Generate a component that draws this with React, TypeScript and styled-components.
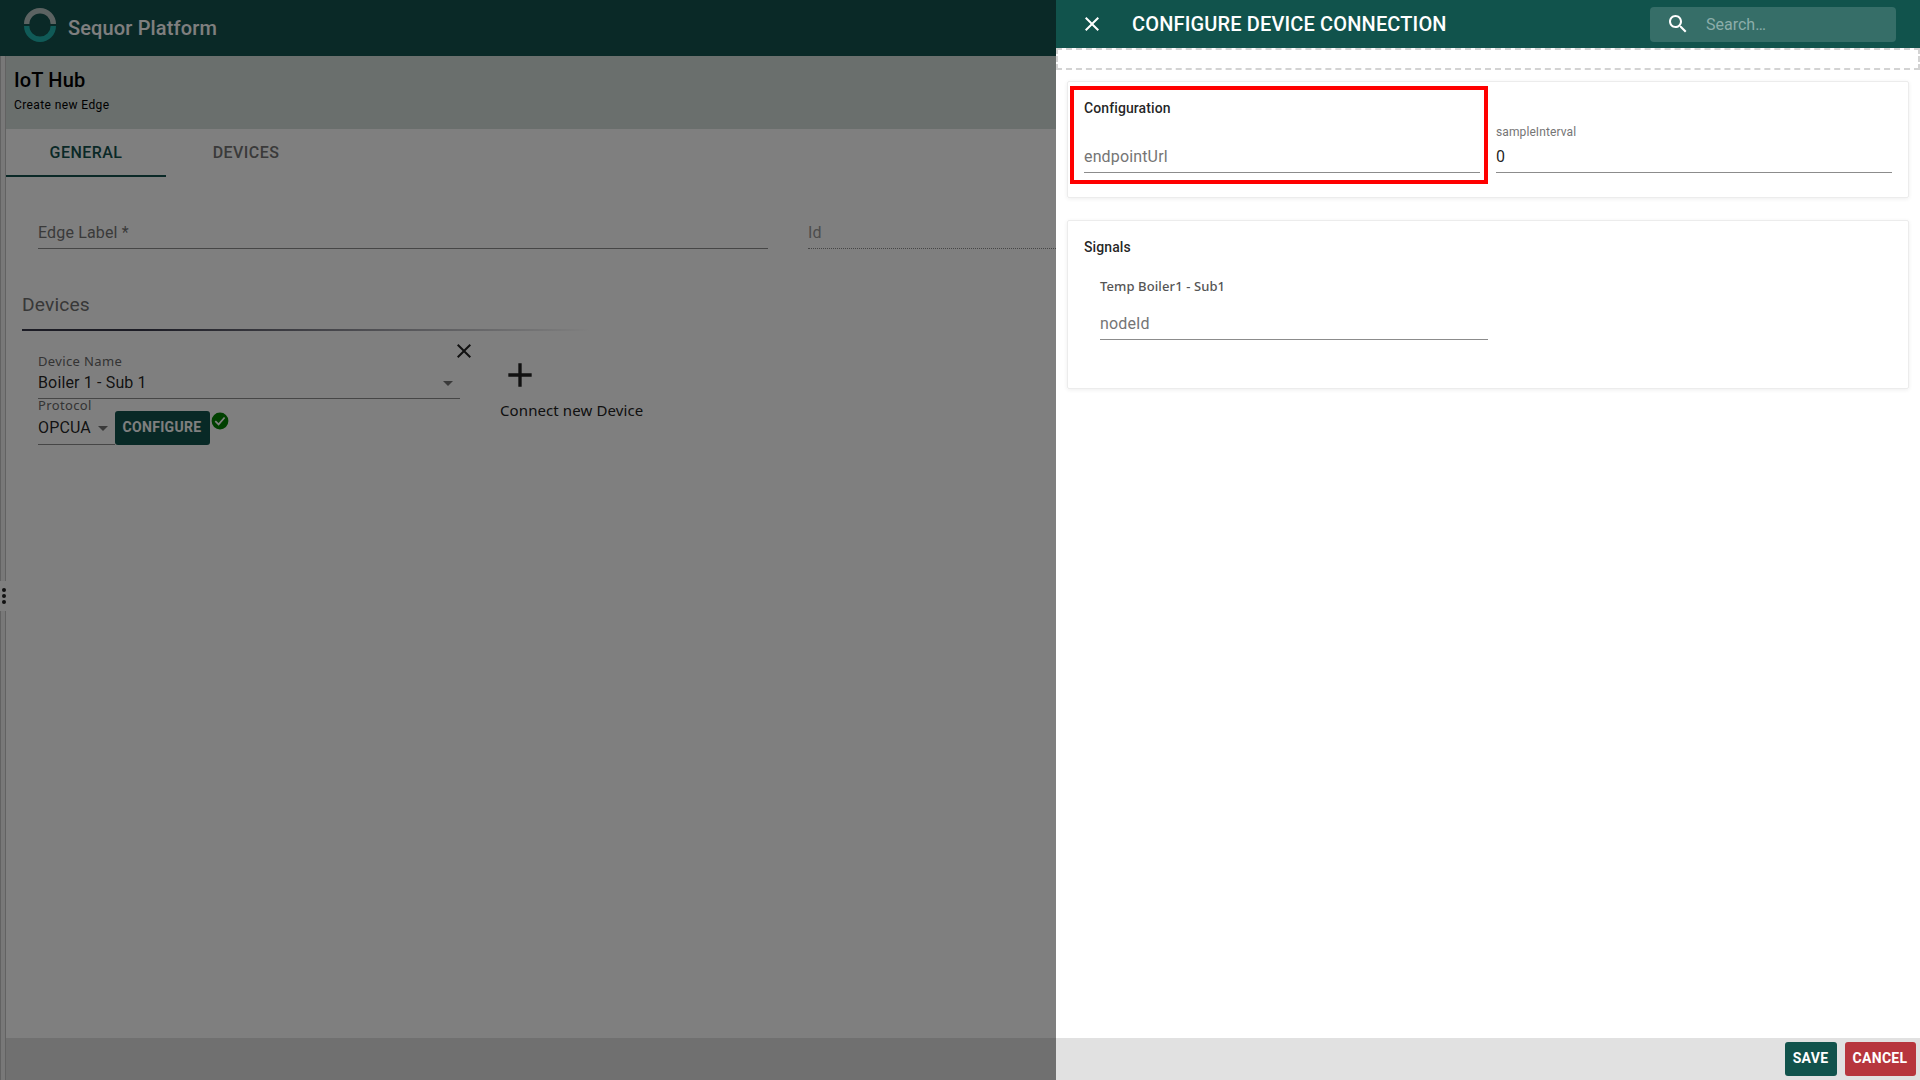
import React from "react";
import styled, { createGlobalStyle } from "styled-components";

const GlobalStyle = createGlobalStyle`
  *, *::before, *::after { box-sizing: border-box; }
  html, body, #root { height: 100%; }
  body { margin: 0; overflow: hidden; font-family: Roboto, "Liberation Sans", sans-serif; color: rgba(0, 0, 0, 0.87); background: #fff; }
`;

const system = `"Noto Sans", "Open Sans", sans-serif`;

const Screen = styled.div`
  position: relative;
  width: 1920px;
  height: 1080px;
  display: flex;
  flex-direction: column;
  overflow: hidden;
`;
const TopBar = styled.header`
  flex: none;
  height: 56px;
  display: flex;
  align-items: flex-start;
  padding: 8px 24px;
  gap: 12px;
  background: #14524e;
`;
const Brand = styled.h1`
  margin: 7px 0 0;
  font-size: 20px;
  line-height: 26px;
  font-weight: 500;
  letter-spacing: 0.15px;
  color: #fff;
`;
const Body = styled.div`
  flex: 1;
  display: flex;
  min-height: 0;
`;
const Splitter = styled.div`
  flex: none;
  width: 6px;
  display: flex;
  flex-direction: column;
`;
const Rail = styled.div<{ $height?: number }>`
  ${(p) => (p.$height ? `height: ${p.$height}px; flex: none;` : "flex: 1;")}
  background: #f0f0f0;
  border-left: 1px solid #c4c4c4;
  border-right: 1px solid #c4c4c4;
`;
const Grip = styled.div`
  height: 30px;
  display: flex;
  flex-direction: column;
  align-items: center;
  justify-content: center;
  gap: 2px;
  padding-left: 2px;
`;
const Dot = styled.span`
  width: 4px;
  height: 4px;
  border-radius: 50%;
  background: #222;
`;
const Page = styled.main`
  flex: 1;
  display: flex;
  flex-direction: column;
`;
const PageHead = styled.div`
  height: 73px;
  padding: 11px 8px;
  background: #d5dedb;
  color: #000;
`;
const PageTitle = styled.h2`
  margin: 0;
  font-size: 20px;
  line-height: 27px;
  font-weight: 500;
  letter-spacing: 0.15px;
`;
const PageSub = styled.div`
  font-size: 12px;
  line-height: 20px;
  letter-spacing: 0.4px;
  margin-top: 1px;
`;
const Tabs = styled.nav`
  display: flex;
  height: 48px;
`;
const Tab = styled.div<{ $active?: boolean }>`
  width: 160px;
  display: flex;
  align-items: center;
  justify-content: center;
  padding-bottom: 2px;
  font-size: 16px;
  font-weight: 500;
  letter-spacing: 0.45px;
  color: ${(p) => (p.$active ? "#14524e" : "#757575")};
  box-shadow: ${(p) => (p.$active ? "inset 0 -2px #14524e" : "none")};
`;
const Form = styled.div`
  padding: 0 32px;
  flex: 1;
`;
const Row = styled.div<{ $gap?: number; $top?: number }>`
  display: flex;
  align-items: flex-start;
  gap: ${(p) => p.$gap ?? 0}px;
  margin-top: ${(p) => p.$top ?? 0}px;
`;
const Field = styled.div<{ $width: number; $height?: number; $line?: number; $dotted?: boolean; $filled?: boolean }>`
  width: ${(p) => p.$width}px;
  height: ${(p) => p.$height ?? 33}px;
  flex: none;
  display: flex;
  justify-content: space-between;
  align-items: flex-start;
  font-size: 16px;
  letter-spacing: 0.15px;
  line-height: ${(p) => p.$line ?? 32}px;
  white-space: nowrap;
  color: ${(p) => (p.$filled ? "rgba(0,0,0,.87)" : p.$dotted ? "#9a9a9a" : "#757575")};
  border-bottom: 1px ${(p) => (p.$dotted ? "dotted" : "solid")} #8c8c8c;
`;
const SectionTitle = styled.h3`
  margin: 41px -16px 0;
  height: 41px;
  font-size: 19.2px;
  line-height: 29px;
  font-weight: 400;
  letter-spacing: 0.15px;
  color: #707070;
  border-bottom: 2px solid;
  border-image: linear-gradient(to right, #38384a 0, #38384a 120px, #fff 570px) 1;
`;
const Device = styled.div`
  width: 438px;
  padding-top: 21px;
  position: relative;
`;
const SmallLabel = styled.div<{ $h: number }>`
  height: ${(p) => p.$h}px;
  font-family: ${system};
  font-size: 13px;
  line-height: ${(p) => p.$h}px;
  letter-spacing: 0.36px;
  color: #686868;
`;
const RemoveIcon = styled.svg`
  position: absolute;
  left: 414px;
  top: 8px;
`;
const Button = styled.button<{ $danger?: boolean; $width: number }>`
  width: ${(p) => p.$width}px;
  height: 34px;
  padding: 0 1px 2px 0;
  border: 0;
  border-radius: 3px;
  font-family: Roboto, sans-serif;
  font-size: 14px;
  font-weight: 700;
  letter-spacing: 0.3px;
  color: #fff;
  background: ${(p) => (p.$danger ? "#b7363d" : "#11534c")};
`;
const Connect = styled.div`
  display: flex;
  flex-direction: column;
  padding: 24px 0 0 24px;
  font-family: ${system};
  font-size: 15px;
  line-height: 24px;
  letter-spacing: 0.1px;
  color: #222;
`;
const Caption = styled.span`
  margin-top: 3px;
`;
const PageFoot = styled.footer`
  height: 42px;
  background: #e1e1e1;
`;
const Backdrop = styled.div`
  position: absolute;
  inset: 0;
  background: rgba(0, 0, 0, 0.5);
`;
const Drawer = styled.aside`
  position: absolute;
  top: 0;
  right: 0;
  width: 864px;
  height: 100%;
  display: flex;
  flex-direction: column;
  background: #fff;
`;
const DrawerHead = styled.header`
  height: 48px;
  flex: none;
  display: flex;
  align-items: center;
  padding: 0 24px;
  background: #11534c;
  color: #fff;
`;
const DrawerTitle = styled.h2`
  flex: 1;
  margin: 0 0 0 28px;
  font-size: 20px;
  line-height: 26px;
  font-weight: 500;
  letter-spacing: 0.15px;
  white-space: nowrap;
`;
const Search = styled.div`
  width: 246px;
  height: 35px;
  margin-top: 1px;
  display: flex;
  align-items: center;
  gap: 16px;
  padding-left: 16px;
  border-radius: 4px;
  background: #366e68;
  color: #8cadaa;
  font-size: 16px;
  svg { color: #fff; margin-top: -1px; }
`;
const DropZone = styled.div`
  height: 22px;
  flex: none;
  border: 2px dashed #d3d3d3;
`;
const Card = styled.section<{ $height: number; $top: number }>`
  height: ${(p) => p.$height}px;
  flex: none;
  margin: ${(p) => p.$top}px 11px 0;
  border: 1px solid #ececec;
  border-radius: 2px;
  box-shadow: 0 1px 4px rgba(0, 0, 0, 0.07);
  display: flex;
`;
const Highlight = styled.div`
  width: 418px;
  height: 98px;
  margin: 4px 0 0 2px;
  flex: none;
  border: 4px solid #f00;
  padding: 8px 10px;
`;
const CardTitle = styled.h4`
  margin: 0;
  font-size: 14px;
  line-height: 20px;
  font-weight: 500;
  letter-spacing: 0.1px;
  color: rgba(0, 0, 0, 0.87);
`;
const Interval = styled.div`
  padding: 42px 0 0 8px;
  font-size: 12px;
  line-height: 16px;
  letter-spacing: 0.1px;
  color: #757575;
`;
const Signals = styled.div`
  padding: 16px;
`;
const Signal = styled.div`
  padding: 20px 0 0 16px;
`;
const SignalName = styled.div`
  font-family: ${system};
  font-size: 13px;
  line-height: 18px;
  letter-spacing: 0.1px;
  font-weight: 500;
  height: 30px;
  color: #555;
`;
const Actions = styled.footer`
  height: 42px;
  margin-top: auto;
  flex: none;
  display: flex;
  align-items: center;
  justify-content: flex-end;
  gap: 8px;
  padding-right: 4px;
  background: #e1e1e1;
`;

const Icon = ({ d, size = 24 }: { d: string; size?: number }) => (
  <svg width={size} height={size} viewBox="0 0 24 24" fill="currentColor"><path d={d} /></svg>
);
const closePath = "M19 6.41 17.59 5 12 10.59 6.41 5 5 6.41 10.59 12 5 17.59 6.41 19 12 13.41 17.59 19 19 17.59 13.41 12z";
const searchPath = "M15.5 14h-.79l-.28-.27C15.41 12.59 16 11.11 16 9.5 16 5.91 13.09 3 9.5 3S3 5.91 3 9.5 5.91 16 9.5 16c1.61 0 3.09-.59 4.23-1.57l.27.28v.79l5 4.99L20.49 19zm-6 0C7.01 14 5 11.99 5 9.5S7.01 5 9.5 5 14 7.01 14 9.5 11.99 14 9.5 14";

const Caret = styled.span<{ $top: number }>`
  width: 0;
  height: 0;
  margin: ${(p) => p.$top}px 7px 0 0;
  border: 5px solid transparent;
  border-top-color: #757575;
  border-bottom: 0;
`;
const Badge = styled.svg`
  margin: 1px 0 0 1px;
`;

export default function App() {
  return (
    <>
      <GlobalStyle />
      <Screen>
        <TopBar>
          <svg width="32" height="34" viewBox="0 0 32 34" fill="none" strokeWidth="5.4">
            <path d="M2.7 16a13.3 13.3 0 0 1 26.6 0" stroke="#b9c6c4" />
            <path d="M2.7 18a13.3 13.3 0 0 0 26.6 0" stroke="#20b5ae" />
          </svg>
          <Brand>Sequor Platform</Brand>
        </TopBar>
        <Body>
          <Splitter>
            <Rail $height={525} />
            <Grip><Dot /><Dot /><Dot /></Grip>
            <Rail />
          </Splitter>
          <Page>
            <PageHead>
              <PageTitle>IoT Hub</PageTitle>
              <PageSub>Create new Edge</PageSub>
            </PageHead>
            <Tabs>
              <Tab $active>GENERAL</Tab>
              <Tab>DEVICES</Tab>
            </Tabs>
            <Form>
              <Row $gap={40} $top={39}>
                <Field $width={730} $line={34}>Edge Label *</Field>
                <Field $width={730} $line={34} $dotted>Id</Field>
              </Row>
              <SectionTitle>Devices</SectionTitle>
              <Row>
                <Device>
                  <RemoveIcon width="24" height="24" viewBox="0 0 24 24" fill="#222"><path d={closePath} /></RemoveIcon>
                  <SmallLabel $h={18}>Device Name</SmallLabel>
                  <Field $width={422} $height={29} $line={25} $filled>Boiler 1 - Sub 1<Caret $top={11} /></Field>
                  <SmallLabel $h={12}>Protocol</SmallLabel>
                  <Row>
                    <Field $width={77} $height={34} $line={33} $filled>OPCUA<Caret $top={15} /></Field>
                    <Button $width={95}>CONFIGURE</Button>
                    <Badge width="18" height="18" viewBox="0 0 18 18">
                      <circle cx="9" cy="9" r="8.4" fill="#008000" />
                      <path d="M4.3 9.2 7.6 12.4 13.6 5.5" fill="none" stroke="#fff" strokeWidth="1.7" />
                    </Badge>
                  </Row>
                </Device>
                <Connect>
                  <Icon size={40} d="M19 13h-6v6h-2v-6H5v-2h6V5h2v6h6z" />
                  <Caption>Connect new Device</Caption>
                </Connect>
              </Row>
            </Form>
            <PageFoot />
          </Page>
        </Body>
        <Backdrop />
        <Drawer>
          <DrawerHead>
            <Icon d={closePath} />
            <DrawerTitle>CONFIGURE DEVICE CONNECTION</DrawerTitle>
            <Search><Icon d={searchPath} />Search…</Search>
          </DrawerHead>
          <DropZone />
          <Card $height={117} $top={11}>
            <Highlight>
              <CardTitle>Configuration</CardTitle>
              <Row $top={23}><Field $width={396} $height={32}>endpointUrl</Field></Row>
            </Highlight>
            <Interval>
              sampleInterval
              <Field $width={396} $height={33} $line={34} $filled>0</Field>
            </Interval>
          </Card>
          <Card $height={169} $top={22}>
            <Signals>
              <CardTitle>Signals</CardTitle>
              <Signal>
                <SignalName>Temp Boiler1 - Sub1</SignalName>
                <Field $width={388} $line={34}>nodeId</Field>
              </Signal>
            </Signals>
          </Card>
          <Actions>
            <Button $width={52}>SAVE</Button>
            <Button $width={71} $danger>CANCEL</Button>
          </Actions>
        </Drawer>
      </Screen>
    </>
  );
}
